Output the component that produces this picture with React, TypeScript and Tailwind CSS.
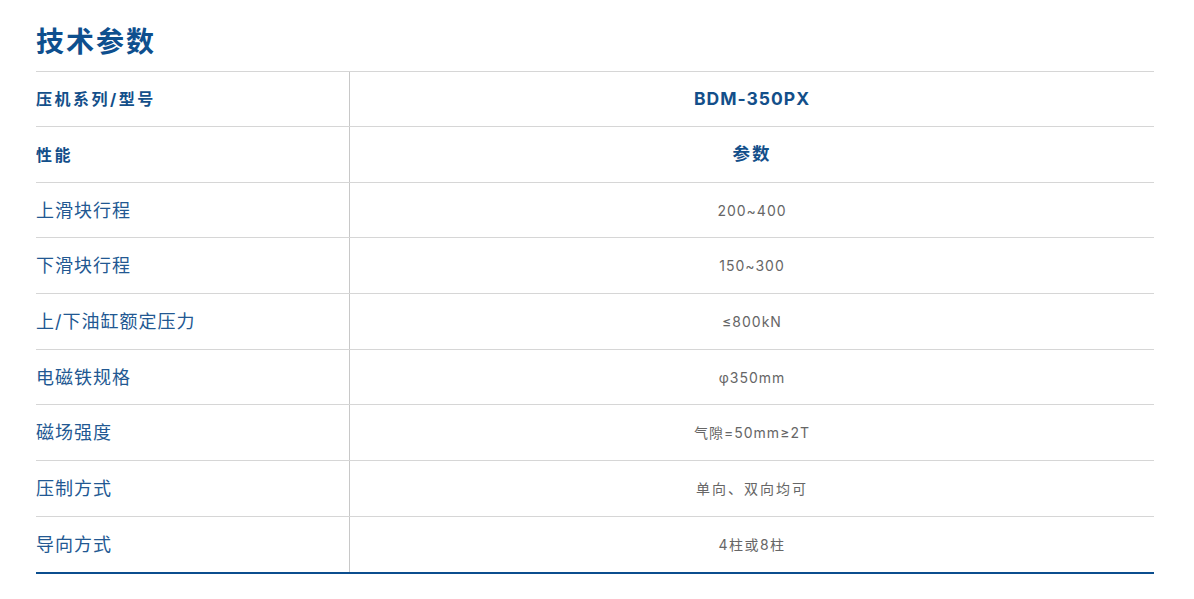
import React from 'react';

interface SpecRow {
    label: string;
    value: string;
    head?: boolean;
    h: string;
    tr: string;
}

const rows: SpecRow[] = [
    { label: '压机系列/型号', value: 'BDM-350PX', head: true, h: 'h-[55px]', tr: 'tracking-[1px]' },
    { label: '性能', value: '参数', head: true, h: 'h-[56px]', tr: 'tracking-[2px]' },
    { label: '上滑块行程', value: '200~400', h: 'h-[55px]', tr: 'tracking-[1px]' },
    { label: '下滑块行程', value: '150~300', h: 'h-[56px]', tr: 'tracking-[1px]' },
    { label: '上/下油缸额定压力', value: '≤800kN', h: 'h-[56px]', tr: 'tracking-[1px]' },
    { label: '电磁铁规格', value: 'φ350mm', h: 'h-[55px]', tr: 'tracking-[1px]' },
    { label: '磁场强度', value: '气隙=50mm≥2T', h: 'h-[56px]', tr: 'tracking-[1px]' },
    { label: '压制方式', value: '单向、双向均可', h: 'h-[56px]', tr: 'tracking-[2px]' },
    { label: '导向方式', value: '4柱或8柱', h: 'h-[57px]', tr: 'tracking-[1.5px]' },
];

const font = "font-['Inter','Noto_Sans_CJK_SC',sans-serif]";

export default function App() {
    return (
        <div className={`w-[1194px] h-[599px] bg-white px-[36px] pt-[22px] ${font}`}>
            <h1 className="text-[28px] leading-[40px] font-bold tracking-[2px] text-[#0e4f8e] mb-[9px]">技术参数</h1>

            <div className="w-[1118px] border-t border-[#d6d6d6]">
                {rows.map((row, i) => (
                    <div
                        key={row.label}
                        className={`flex ${row.h} ${i === rows.length - 1 ? 'border-b-2 border-[#0b4d8e]' : 'border-b border-[#d6d6d6]'}`}
                    >
                        <div className="w-[314px] shrink-0 flex items-center border-r border-[#c8c8c8]">
                            {row.head ? (
                                <span className="text-[16px] font-bold tracking-[2.5px] text-[#134f8a]">{row.label}</span>
                            ) : (
                                <span className="text-[18px] tracking-[1px] text-[#225892]">{row.label}</span>
                            )}
                        </div>
                        <div className="flex-1 flex items-center justify-center">
                            {row.head ? (
                                <span className={`text-[17.5px] font-bold ${row.tr} text-[#134f8a]`}>{row.value}</span>
                            ) : (
                                <span className={`text-[14px] ${row.tr} text-[#666666]`}>{row.value}</span>
                            )}
                        </div>
                    </div>
                ))}
            </div>
        </div>
    );
}
